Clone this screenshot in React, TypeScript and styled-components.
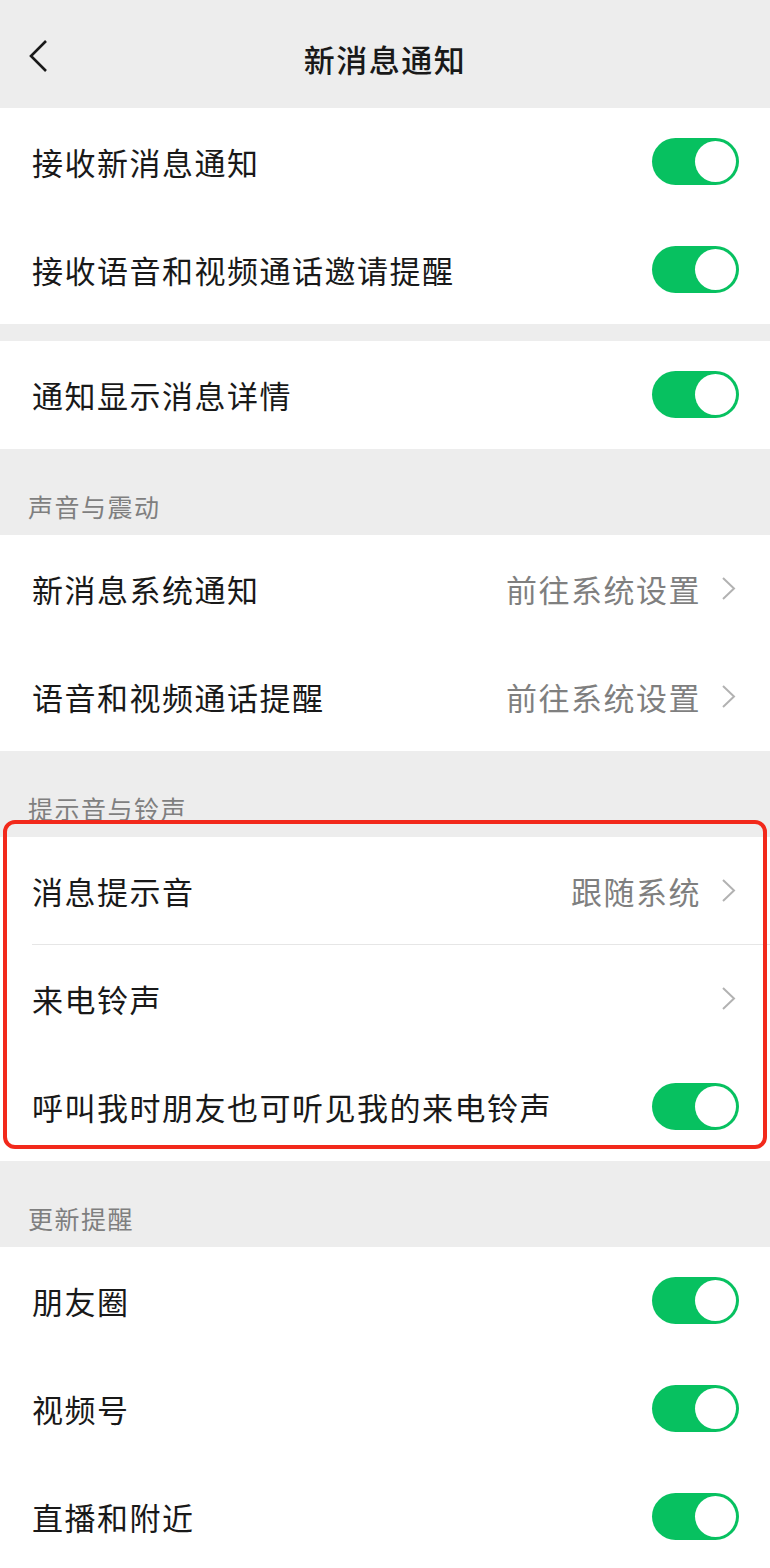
import styled, { createGlobalStyle } from 'styled-components';

const GlobalStyle = createGlobalStyle`
  html, body {
    margin: 0;
    padding: 0;
    background: #ededed;
  }
  body {
    font-family: "Noto Sans CJK SC", "Noto Sans", sans-serif;
    -webkit-font-smoothing: antialiased;
  }
`;

const Page = styled.div`
  width: 770px;
  min-height: 1568px;
  background: #ededed;
  overflow: hidden;
`;

const NavBar = styled.header`
  position: relative;
  height: 108px;
  display: flex;
  align-items: center;
  justify-content: center;
  padding-top: 8px;
  box-sizing: border-box;
  background: #ededed;
`;

const BackButton = styled.button`
  position: absolute;
  left: 22px;
  top: 34px;
  width: 32px;
  height: 44px;
  padding: 0;
  border: none;
  background: none;
  display: flex;
  align-items: center;
  justify-content: center;
`;

const Title = styled.h1`
  margin: 0;
  font-size: 31px;
  font-weight: 500;
  letter-spacing: 1.5px;
  color: #191919;
`;

const Group = styled.section<{ $gap?: boolean }>`
  background: #fff;
  margin-top: ${(p) => (p.$gap ? '17px' : '0')};
`;

const SectionTitle = styled.div`
  height: 86px;
  box-sizing: border-box;
  display: flex;
  align-items: flex-end;
  padding: 0 0 16px 28px;
  font-size: 25px;
  line-height: 1;
  letter-spacing: 1.5px;
  color: #7f7f7f;
`;

const Row = styled.div<{ $divider?: boolean; $link?: boolean }>`
  position: relative;
  height: 108px;
  box-sizing: border-box;
  display: flex;
  align-items: center;
  justify-content: space-between;
  padding: 0 ${(p) => (p.$link ? '34px' : '31px')} 2px 32px;

  &::after {
    content: '';
    display: ${(p) => (p.$divider ? 'block' : 'none')};
    position: absolute;
    left: 32px;
    right: 0;
    bottom: 0;
    height: 1px;
    background: #e6e6e6;
  }
`;

const Label = styled.span`
  font-size: 31px;
  line-height: 1;
  letter-spacing: 1.5px;
  color: #191919;
`;

const Extra = styled.div`
  display: flex;
  align-items: center;
  gap: 20px;
`;

const Value = styled.span`
  font-size: 31px;
  line-height: 1;
  letter-spacing: 1.5px;
  color: #7f7f7f;
`;

const Track = styled.div<{ $on: boolean }>`
  position: relative;
  width: 87px;
  height: 47px;
  border-radius: 24px;
  background: ${(p) => (p.$on ? '#07c160' : '#e5e5e5')};
  flex-shrink: 0;
`;

const Knob = styled.span<{ $on: boolean }>`
  position: absolute;
  top: 3px;
  left: ${(p) => (p.$on ? '43px' : '3px')};
  width: 41px;
  height: 41px;
  border-radius: 50%;
  background: #fff;
`;

const Highlight = styled.div`
  position: relative;

  &::after {
    content: '';
    position: absolute;
    top: -17px;
    left: 3px;
    right: 3px;
    bottom: 12px;
    border: 4px solid #f2291b;
    border-radius: 12px;
    pointer-events: none;
    z-index: 2;
  }
`;

function Switch({ on = true }: { on?: boolean }) {
  return (
    <Track $on={on}>
      <Knob $on={on} />
    </Track>
  );
}

function Chevron() {
  return (
    <svg width="15" height="25" viewBox="0 0 15 25">
      <path d="M2 2 L13 12.5 L2 23" fill="none" stroke="#b2b2b2" strokeWidth="2" strokeLinejoin="miter" />
    </svg>
  );
}

function BackIcon() {
  return (
    <svg width="22" height="34" viewBox="0 0 22 34">
      <path d="M19 2 L4 17 L19 32" fill="none" stroke="#191919" strokeWidth="2.6" />
    </svg>
  );
}

function ToggleRow({ label, divider }: { label: string; divider?: boolean }) {
  return (
    <Row $divider={divider}>
      <Label>{label}</Label>
      <Switch />
    </Row>
  );
}

function LinkRow({ label, value, divider }: { label: string; value?: string; divider?: boolean }) {
  return (
    <Row $link $divider={divider}>
      <Label>{label}</Label>
      <Extra>
        {value && <Value>{value}</Value>}
        <Chevron />
      </Extra>
    </Row>
  );
}

export default function App() {
  return (
    <>
      <GlobalStyle />
      <Page>
        <NavBar>
          <BackButton aria-label="返回">
            <BackIcon />
          </BackButton>
          <Title>新消息通知</Title>
        </NavBar>

        <Group>
          <ToggleRow label="接收新消息通知" />
          <ToggleRow label="接收语音和视频通话邀请提醒" />
        </Group>

        <Group $gap>
          <ToggleRow label="通知显示消息详情" />
        </Group>

        <SectionTitle>声音与震动</SectionTitle>
        <Group>
          <LinkRow label="新消息系统通知" value="前往系统设置" />
          <LinkRow label="语音和视频通话提醒" value="前往系统设置" />
        </Group>

        <SectionTitle>提示音与铃声</SectionTitle>
        <Highlight>
          <Group>
            <LinkRow label="消息提示音" value="跟随系统" divider />
            <LinkRow label="来电铃声" />
            <ToggleRow label="呼叫我时朋友也可听见我的来电铃声" />
          </Group>
        </Highlight>

        <SectionTitle>更新提醒</SectionTitle>
        <Group>
          <ToggleRow label="朋友圈" />
          <ToggleRow label="视频号" />
          <ToggleRow label="直播和附近" />
        </Group>
      </Page>
    </>
  );
}
